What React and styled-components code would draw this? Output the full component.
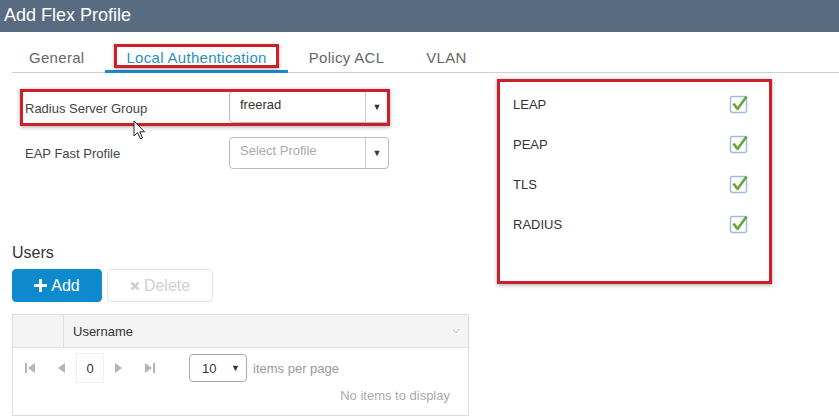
import React from 'react';
import styled, { createGlobalStyle } from 'styled-components';

const GlobalStyle = createGlobalStyle`
  body {
    margin: 0;
    background: #fff;
    font-family: 'Liberation Sans', Arial, sans-serif;
    color: #333;
  }
`;

const Page = styled.div`
  position: relative;
  width: 839px;
  height: 420px;
  overflow: hidden;
  background: #fff;
`;

const TitleBar = styled.header`
  height: 32px;
  background: #596b80;
  color: #fff;
  font-size: 18px;
  line-height: 30px;
  padding-left: 4px;
`;

const TabList = styled.nav`
  display: flex;
  height: 41px;
  margin-left: 12px;
  border-bottom: 1px solid #cfcfcf;
  box-sizing: border-box;
`;

const Tab = styled.div`
  box-sizing: border-box;
  height: 41px;
  padding: 12px 9px 0;
  margin-bottom: -1px;
  border-bottom: 3px solid ${p => (p.active ? '#1a88c9' : 'transparent')};
  color: ${p => (p.active ? '#2a8fc2' : '#666')};
  font-size: 15px;
  letter-spacing: 0.3px;

  &:first-child {
    padding-left: 5px;
  }
`;

const TabLabel = styled.span`
  display: inline-block;
  padding: 3px 9px 0;
  line-height: 15px;
  border: 3px solid ${p => (p.highlight ? '#cc1f27' : 'transparent')};
  box-shadow: ${p => (p.highlight ? '0 1px 3px rgba(0,0,0,0.35)' : 'none')};
`;

const Body = styled.div`
  display: flex;
  align-items: flex-start;
`;

const LeftColumn = styled.section`
  width: 473px;
  padding-left: 12px;
  padding-top: 16px;
`;

const FormRow = styled.div`
  display: flex;
  align-items: center;
  width: 370px;
  height: 37px;
  margin-left: 8px;
  margin-bottom: 8px;
  padding-left: 5px;
  box-sizing: border-box;
  outline: ${p => (p.highlight ? '3px solid #cc1f27' : 'none')};
  outline-offset: -3px;
  box-shadow: ${p => (p.highlight ? '0 1px 4px rgba(0,0,0,0.35)' : 'none')};
`;

const FieldLabel = styled.label`
  width: 204px;
  font-size: 13px;
  color: #444;
  padding-top: 2px;
`;

const Select = styled.div`
  display: flex;
  width: 160px;
  height: 32px;
  box-sizing: border-box;
  border: 1px solid #bbb;
  border-radius: 4px;
  background: #fff;
  margin-top: ${p => (p.nudge ? '-2px' : '0')};
`;

const SelectValue = styled.div`
  flex: 1;
  padding: 5px 0 0 10px;
  font-size: 13px;
  color: ${p => (p.placeholder ? '#aaa' : '#333')};
`;

const SelectArrow = styled.div`
  width: 22px;
  border-left: 1px solid #ccc;
  display: flex;
  align-items: center;
  justify-content: center;
  font-size: 9px;
  color: #333;
`;

const SectionTitle = styled.h3`
  margin: 72px 0 0;
  font-size: 16px;
  font-weight: normal;
  line-height: 20px;
  color: #333;
`;

const ButtonRow = styled.div`
  display: flex;
  gap: 5px;
  margin-top: 6px;
`;

const Button = styled.button`
  height: 33px;
  box-sizing: border-box;
  border-radius: 4px;
  font-family: inherit;
  font-size: 16px;
  display: flex;
  align-items: center;
  justify-content: center;
  gap: 4px;
  background: ${p => (p.primary ? '#0d8ace' : '#fff')};
  border: 1px solid ${p => (p.primary ? '#0d8ace' : '#e2e2e2')};
  color: ${p => (p.primary ? '#fff' : '#d0d0d0')};
  width: ${p => p.width}px;
  padding: 0;
`;

const Table = styled.div`
  margin-top: 12px;
  width: 457px;
  height: 102px;
  box-sizing: border-box;
  border: 1px solid #ddd;
`;

const TableHead = styled.div`
  display: flex;
  height: 33px;
  background: #f4f4f4;
  border-bottom: 1px solid #e2e2e2;
  box-sizing: border-box;
`;

const SelectCol = styled.div`
  width: 50px;
  border-right: 1px solid #e2e2e2;
`;

const HeadCell = styled.div`
  flex: 1;
  display: flex;
  align-items: center;
  justify-content: space-between;
  padding: 0 8px 0 9px;
  font-size: 13px;
  color: #333;
`;

const Pager = styled.div`
  display: flex;
  align-items: center;
  padding: 5px 0 0 2px;
`;

const PagerButton = styled.div`
  width: 30px;
  height: 30px;
  display: flex;
  align-items: center;
  justify-content: center;
`;

const PageInput = styled.div`
  width: 28px;
  height: 30px;
  margin: 0 1px;
  box-sizing: border-box;
  border: 1px solid #f0f0f0;
  display: flex;
  align-items: center;
  justify-content: center;
  font-size: 13px;
  color: #333;
`;

const PageSize = styled.div`
  display: flex;
  align-items: center;
  justify-content: space-between;
  width: 58px;
  height: 28px;
  margin-left: 24px;
  padding: 0 6px 0 12px;
  box-sizing: border-box;
  border: 1px solid #aaa;
  border-radius: 4px;
  font-size: 13px;
  color: #333;
`;

const PagerText = styled.span`
  margin-left: 6px;
  font-size: 13px;
  color: #999;
`;

const EmptyNote = styled.div`
  text-align: right;
  padding: 5px 18px 0 0;
  font-size: 13px;
  color: #aaa;
`;

const MethodsBox = styled.section`
  margin: 6px 0 0 12px;
  width: 275px;
  height: 205px;
  box-sizing: border-box;
  border: 3px solid #cc1f27;
  box-shadow: 0 1px 4px rgba(0, 0, 0, 0.35);
  padding-top: 2px;
`;

const MethodRow = styled.div`
  display: flex;
  align-items: center;
  justify-content: space-between;
  height: 40px;
  padding: 0 20px 0 13px;
  font-size: 13px;
  color: #333;
`;

const Cursor = styled.svg`
  position: absolute;
  left: 133px;
  top: 120px;
`;

const Check = () => (
  <svg width="20" height="20" viewBox="0 0 20 20">
    <rect x="1.5" y="2.5" width="16" height="16" rx="2" fill="#fff" stroke="#9ebce8" strokeWidth="1.5" />
    <path d="M4.5 9.5 L8.5 15 L17.5 2.5" fill="none" stroke="#6aa533" strokeWidth="2.6" strokeLinejoin="round" />
  </svg>
);

const PagerIcon = ({ dir, end }) => (
  <svg width="12" height="10" viewBox="0 0 12 10">
    {dir === 'left' ? (
      <>
        {end && <rect x="1" y="0" width="2" height="10" fill="#b5b5b5" />}
        <path d="M11 0 L4 5 L11 10 Z" fill="#b5b5b5" />
      </>
    ) : (
      <>
        <path d="M1 0 L8 5 L1 10 Z" fill="#b5b5b5" />
        {end && <rect x="9" y="0" width="2" height="10" fill="#b5b5b5" />}
      </>
    )}
  </svg>
);

const methods = ['LEAP', 'PEAP', 'TLS', 'RADIUS'];

export default function App() {
  return (
    <Page>
      <GlobalStyle />
      <TitleBar>Add Flex Profile</TitleBar>
      <TabList>
        <Tab><TabLabel>General</TabLabel></Tab>
        <Tab active><TabLabel highlight>Local Authentication</TabLabel></Tab>
        <Tab><TabLabel>Policy ACL</TabLabel></Tab>
        <Tab><TabLabel>VLAN</TabLabel></Tab>
      </TabList>
      <Body>
        <LeftColumn>
          <FormRow highlight>
            <FieldLabel>Radius Server Group</FieldLabel>
            <Select nudge>
              <SelectValue>freerad</SelectValue>
              <SelectArrow>▼</SelectArrow>
            </Select>
          </FormRow>
          <FormRow>
            <FieldLabel>EAP Fast Profile</FieldLabel>
            <Select>
              <SelectValue placeholder>Select Profile</SelectValue>
              <SelectArrow>▼</SelectArrow>
            </Select>
          </FormRow>
          <SectionTitle>Users</SectionTitle>
          <ButtonRow>
            <Button primary width={90}>
              <svg width="13" height="13" viewBox="0 0 13 13">
                <path d="M5 0h3v5h5v3H8v5H5V8H0V5h5z" fill="#fff" />
              </svg>
              Add
            </Button>
            <Button width={106}>
              <svg width="10" height="10" viewBox="0 0 10 10">
                <path d="M1.5 1.5 L8.5 8.5 M8.5 1.5 L1.5 8.5" stroke="#d0d0d0" strokeWidth="2.6" />
              </svg>
              Delete
            </Button>
          </ButtonRow>
          <Table>
            <TableHead>
              <SelectCol />
              <HeadCell>
                Username
                <svg width="8" height="6" viewBox="0 0 8 6">
                  <path d="M1 2 L4 5 L7 1" fill="none" stroke="#aaa" strokeWidth="1" strokeDasharray="1.2 0.8" />
                </svg>
              </HeadCell>
            </TableHead>
            <Pager>
              <PagerButton><PagerIcon dir="left" end /></PagerButton>
              <PagerButton><PagerIcon dir="left" /></PagerButton>
              <PageInput>0</PageInput>
              <PagerButton><PagerIcon dir="right" /></PagerButton>
              <PagerButton><PagerIcon dir="right" end /></PagerButton>
              <PageSize>
                10
                <span style={{ fontSize: 9 }}>▼</span>
              </PageSize>
              <PagerText>items per page</PagerText>
            </Pager>
            <EmptyNote>No items to display</EmptyNote>
          </Table>
        </LeftColumn>
        <MethodsBox>
          {methods.map(m => (
            <MethodRow key={m}>
              {m}
              <Check />
            </MethodRow>
          ))}
        </MethodsBox>
      </Body>
      <Cursor width="14" height="20" viewBox="0 0 14 20">
        <path d="M1 1 L1 16 L4.5 12.5 L7.5 19 L9.5 18 L6.8 11.8 L11.5 11.8 Z" fill="#fff" stroke="#222" strokeWidth="1" strokeLinejoin="round" />
      </Cursor>
    </Page>
  );
}
